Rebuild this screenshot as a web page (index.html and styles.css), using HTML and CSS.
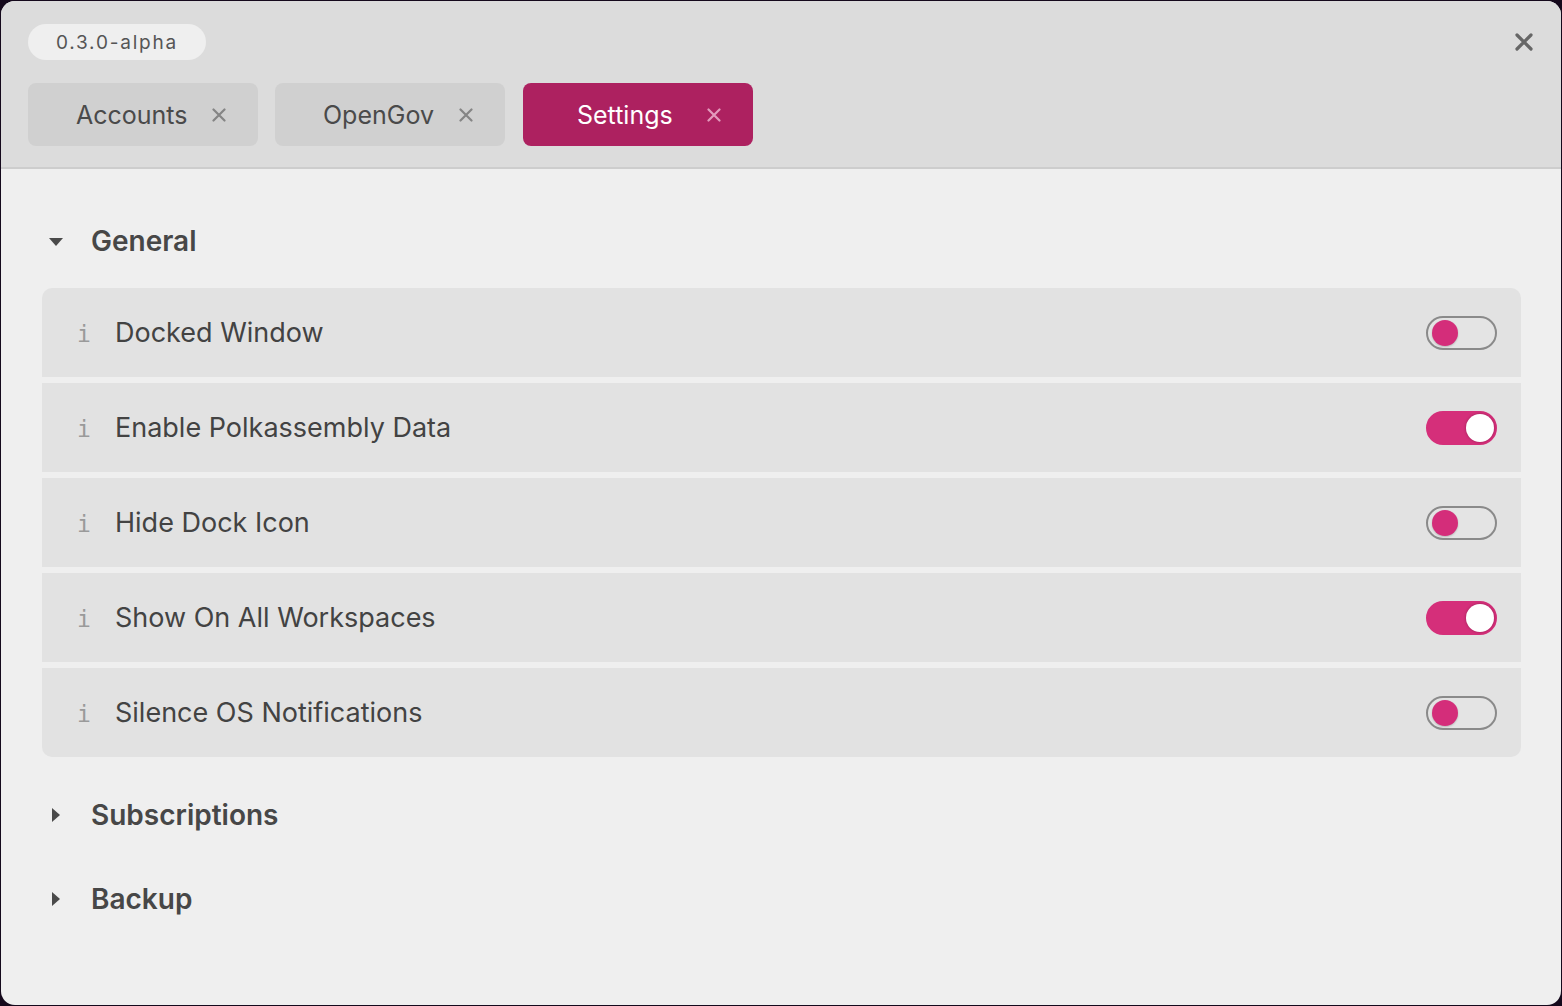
FILE: index.html
```html
<!DOCTYPE html>
<html>
<head>
<meta charset="utf-8">
<link rel="stylesheet" href="styles.css">
</head>
<body>
<div class="window">
  <header class="header">
    <div class="top">
      <span class="version">0.3.0-alpha</span>
      <button class="close-win" aria-label="close">
        <svg width="18" height="18" viewBox="0 0 18 18"><path d="M2 2L16 16M16 2L2 16" stroke="#666" stroke-width="3.2" stroke-linecap="round"/></svg>
      </button>
    </div>
    <nav class="tabs">
      <div class="tab"><span class="tab-label">Accounts</span><span class="tab-x"><svg width="14" height="14" viewBox="0 0 14 14"><path d="M1.5 1.5L12.5 12.5M12.5 1.5L1.5 12.5" stroke="currentColor" stroke-width="2.2" stroke-linecap="round"/></svg></span></div>
      <div class="tab"><span class="tab-label">OpenGov</span><span class="tab-x"><svg width="14" height="14" viewBox="0 0 14 14"><path d="M1.5 1.5L12.5 12.5M12.5 1.5L1.5 12.5" stroke="currentColor" stroke-width="2.2" stroke-linecap="round"/></svg></span></div>
      <div class="tab active"><span class="tab-label">Settings</span><span class="tab-x"><svg width="14" height="14" viewBox="0 0 14 14"><path d="M1.5 1.5L12.5 12.5M12.5 1.5L1.5 12.5" stroke="currentColor" stroke-width="2.2" stroke-linecap="round"/></svg></span></div>
    </nav>
  </header>
  <main class="content">
    <section class="section">
      <div class="section-head">
        <span class="caret down"></span>
        <h2>General</h2>
      </div>
      <div class="rows">
        <div class="row"><span class="info">i</span><span class="label">Docked Window</span><span class="toggle"><span class="knob"></span></span></div>
        <div class="row"><span class="info">i</span><span class="label">Enable Polkassembly Data</span><span class="toggle on"><span class="knob"></span></span></div>
        <div class="row"><span class="info">i</span><span class="label">Hide Dock Icon</span><span class="toggle"><span class="knob"></span></span></div>
        <div class="row"><span class="info">i</span><span class="label">Show On All Workspaces</span><span class="toggle on"><span class="knob"></span></span></div>
        <div class="row"><span class="info">i</span><span class="label">Silence OS Notifications</span><span class="toggle"><span class="knob"></span></span></div>
      </div>
    </section>
    <section class="section collapsed">
      <div class="section-head">
        <span class="caret right"></span>
        <h2>Subscriptions</h2>
      </div>
    </section>
    <section class="section collapsed">
      <div class="section-head">
        <span class="caret right"></span>
        <h2>Backup</h2>
      </div>
    </section>
  </main>
</div>
</body>
</html>
```
FILE: styles.css
```css
* { box-sizing: border-box; }
html, body { margin: 0; padding: 0; }
body {
  background: #15091c;
  width: 1562px;
  height: 1006px;
  padding: 1px;
  font-family: Inter, "Noto Sans", sans-serif;
}
.window {
  width: 1560px;
  height: 1004px;
  border-radius: 14px;
  overflow: hidden;
  background: #efefef;
  display: flex;
  flex-direction: column;
}
.header {
  background: #dcdcdc;
  border-bottom: 2px solid #cdcdcd;
  height: 168px;
  padding: 23px 27px 0 27px;
}
.top {
  display: flex;
  align-items: center;
  justify-content: space-between;
  height: 36px;
}
.version {
  display: inline-flex;
  align-items: center;
  justify-content: center;
  width: 178px;
  height: 36px;
  border-radius: 18px;
  background: #efefef;
  color: #555;
  font-size: 19px;
  letter-spacing: 1.8px;
}
.close-win {
  border: 0;
  background: none;
  padding: 0;
  margin-right: 1px;
  display: flex;
}
.tabs {
  display: flex;
  gap: 17px;
  margin-top: 23px;
}
.tab {
  width: 230px;
  height: 63px;
  border-radius: 8px;
  background: #d0d0d0;
  display: flex;
  align-items: center;
  padding-left: 48px;
  color: #4a4a4a;
  font-size: 25px;
}
.tab-label { flex: 0 0 auto; }
.tab-x {
  margin-left: auto;
  margin-right: 32px;
  color: #858585;
  display: flex;
}
.tab.active {
  background: #ad2160;
  color: #fff;
  padding-left: 54px;
  margin-left: 1px;
}
.tab.active .tab-x { color: #e39bbd; }
.content {
  flex: 1;
  padding: 0 40px 0 41px;
}
.section-head {
  display: flex;
  align-items: center;
  height: 84px;
}
.section:first-child .section-head { margin-top: 31px; height: 82px; }
.section-head h2 {
  margin: 0;
  font-size: 28px;
  font-weight: 600;
  color: #474747;
  margin-left: 24px;
}
.caret {
  width: 22px;
  margin-left: 3px;
  display: flex;
  justify-content: center;
}
.caret.down::before {
  content: "";
  border-left: 7.5px solid transparent;
  border-right: 7.5px solid transparent;
  border-top: 8px solid #4a4a4a;
  margin-top: 2px;
}
.caret.right::before {
  content: "";
  border-top: 7px solid transparent;
  border-bottom: 7px solid transparent;
  border-left: 8px solid #4a4a4a;
}
.rows {
  display: flex;
  flex-direction: column;
  gap: 6px;
  margin-top: 6px;
  margin-bottom: 16px;
}
.row {
  height: 89px;
  background: #e2e2e2;
  display: flex;
  align-items: center;
  padding: 0 24px 0 35px;
}
.row:first-child { border-top-left-radius: 10px; border-top-right-radius: 10px; }
.row:last-child { border-bottom-left-radius: 10px; border-bottom-right-radius: 10px; }
.info {
  font-family: "DejaVu Sans Mono", "Liberation Mono", monospace;
  color: #9a9a9a;
  font-size: 23px;
  width: 38px;
  margin-top: 3px;
}
.label {
  font-size: 27px;
  color: #434343;
  flex: 1;
}
.toggle {
  width: 71px;
  height: 34px;
  border-radius: 17px;
  border: 2px solid #8a8a8a;
  background: #e4e4e4;
  position: relative;
  display: flex;
  align-items: center;
  padding: 0 4px;
}
.knob {
  width: 26px;
  height: 26px;
  border-radius: 50%;
  background: #d42d7a;
  box-shadow: 0 1px 2px rgba(0,0,0,0.2);
}
.toggle.on {
  background: #d52f7a;
  border-color: #d52f7a;
  justify-content: flex-end;
  padding: 0 1px;
}
.toggle.on .knob {
  background: #fff;
  width: 28px;
  height: 28px;
  box-shadow: 0 0 3px rgba(0,0,0,0.3);
}
```
